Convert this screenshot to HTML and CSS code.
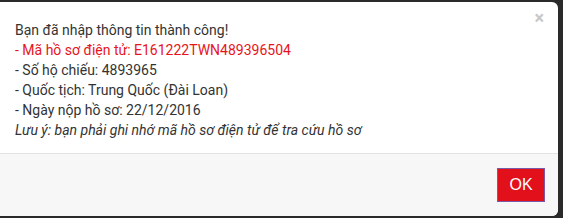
FILE: index.html
```html
<!DOCTYPE html>
<html lang="vi">
  <head>
    <meta charset="UTF-8">
    <title>Thông báo</title>
    <link rel="stylesheet" href="styles.css">
  </head>
  <body>
    <div class="modal">
      <div class="modal-body">
        <span class="close">&times;</span>
        <p>Bạn đã nhập thông tin thành công!</p>
        <p class="red">- Mã hồ sơ điện tử: E161222TWN489396504</p>
        <p>- Số hộ chiếu: 4893965</p>
        <p>- Quốc tịch: Trung Quốc (Đài Loan)</p>
        <p>- Ngày nộp hồ sơ: 22/12/2016</p>
        <p><i>Lưu ý: bạn phải ghi nhớ mã hồ sơ điện tử để tra cứu hồ sơ</i></p>
      </div>
      <div class="modal-footer">
        <button class="btn-ok">OK</button>
      </div>
    </div>
  </body>
</html>
```

FILE: styles.css
```css
* {
  padding: 0;
  margin: 0;
  box-sizing: border-box;
}

body {
  background: #2a2a2a;
  font-family: Roboto, "Noto Sans", sans-serif;
  font-size: 14px;
  color: #333;
  padding: 2px 5px 2px 0;
  height: 218px;
}

.modal {
  background: #fff;
  border-radius: 0 6px 6px 0;
  height: 214px;
  display: flex;
  flex-direction: column;
  overflow: hidden;
}

.modal-body {
  position: relative;
  padding: 18px 15px 0 15px;
  height: 151px;
  line-height: 20px;
}

.red {
  color: #e8141c;
}

.close {
  position: absolute;
  top: 6px;
  right: 14px;
  font-size: 18px;
  font-weight: bold;
  color: #c8c8c8;
}

.modal-footer {
  flex: 1;
  border-top: 1px solid #e2e2e2;
  background: #f7f7f7;
  display: flex;
  justify-content: flex-end;
  align-items: flex-start;
  padding: 14px 13px 0 0;
}

.btn-ok {
  width: 48px;
  height: 34px;
  background: #e2101b;
  border: 1px solid #7a5aa8;
  color: #fff;
  font-family: "Liberation Sans", Arial, sans-serif;
  font-size: 16px;
}
```
